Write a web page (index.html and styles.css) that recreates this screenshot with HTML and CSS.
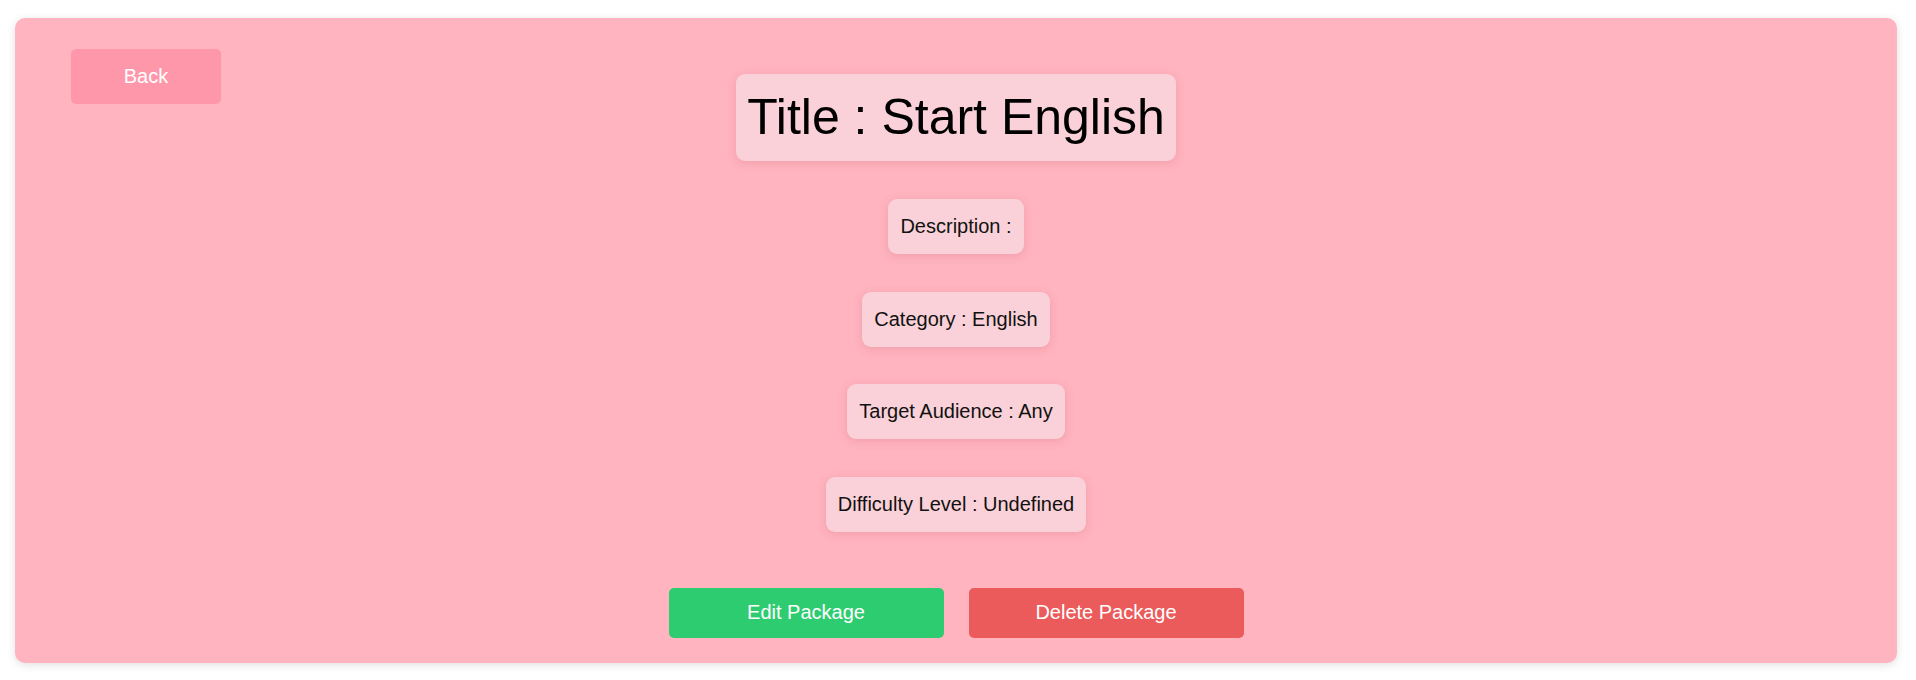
FILE: index.html
```html
<!DOCTYPE html>
<html lang="en">
<head>
<meta charset="utf-8">
<title>Package Details</title>
<link rel="stylesheet" href="styles.css">
</head>
<body>
<main class="card">
  <div class="header">
    <button class="back-btn">Back</button>
    <h1 class="title">Title : Start English</h1>
  </div>
  <ul class="info-list">
    <li class="info">Description :</li>
    <li class="info">Category : English</li>
    <li class="info">Target Audience : Any</li>
    <li class="info">Difficulty Level : Undefined</li>
  </ul>
  <div class="actions">
    <button class="action edit">Edit Package</button>
    <button class="action delete">Delete Package</button>
  </div>
</main>
</body>
</html>
```
FILE: styles.css
```css
* { box-sizing: border-box; }

html, body {
  margin: 0;
  padding: 0;
  background: #ffffff;
  font-family: "Liberation Sans", Arial, sans-serif;
}

body {
  padding: 18px 19px 17px 15px;
}

.card {
  height: 645px;
  background: #ffb4bf;
  border-radius: 10px;
  box-shadow: 0 2px 10px rgba(0, 0, 0, 0.12);
  padding: 31px 56px 25px;
  display: flex;
  flex-direction: column;
}

.header {
  display: grid;
  grid-template-columns: 1fr auto 1fr;
  align-items: start;
}

.back-btn {
  justify-self: start;
  width: 150px;
  height: 55px;
  border: none;
  border-radius: 5px;
  background: #ff97aa;
  color: #ffffff;
  font-family: "Liberation Sans", Arial, sans-serif;
  font-size: 20px;
  cursor: pointer;
}

.title {
  margin: 25px 0 0;
  padding: 15px 11px;
  font-size: 50px;
  font-weight: normal;
  line-height: 57px;
  color: #000000;
  background: #fad1d8;
  border-radius: 9px;
  box-shadow: 0 2px 8px rgba(200, 90, 110, 0.25);
  white-space: nowrap;
}

.info-list {
  list-style: none;
  margin: 38px 0 0;
  padding: 0;
  display: flex;
  flex-direction: column;
  align-items: center;
  gap: 37.5px;
}

.info {
  padding: 16px 12px;
  font-size: 20px;
  line-height: 23px;
  color: #111111;
  background: #fad1d8;
  border-radius: 9px;
  box-shadow: 0 2px 8px rgba(200, 90, 110, 0.25);
}

.actions {
  margin-top: 56px;
  display: flex;
  justify-content: center;
  gap: 25px;
}

.action {
  width: 275px;
  height: 50px;
  border: none;
  border-radius: 5px;
  color: #ffffff;
  font-family: "Liberation Sans", Arial, sans-serif;
  font-size: 20px;
  cursor: pointer;
}

.edit { background: #2ecc71; }
.delete { background: #eb5b5b; }
```
